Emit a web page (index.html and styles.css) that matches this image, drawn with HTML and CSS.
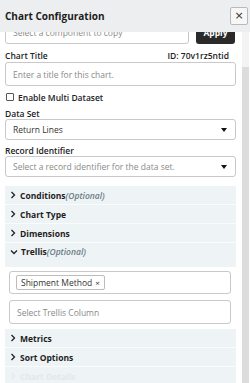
FILE: index.html
```html
<!DOCTYPE html>
<html lang="en">
<head>
<meta charset="UTF-8" />
<title>Chart Configuration</title>
<link rel="stylesheet" href="styles.css">
</head>
<body>
<div class="panel">
  <div class="panel-head">
    <h1>Chart Configuration</h1>
    <button class="close-btn">&times;</button>
  </div>

  <div class="panel-body">
    <div class="body-scroll">
      <div class="body-inner">
        <div class="copy-row">
          <div class="field copy-field">Select a component to copy</div>
          <button class="apply-btn">Apply</button>
        </div>

        <div class="label-row">
          <label>Chart Title</label>
          <span class="chart-id">ID: 70v1rz5ntid</span>
        </div>
        <div class="field">Enter a title for this chart.</div>

        <div class="check-row">
          <span class="check-box"></span>
          <span>Enable Multi Dataset</span>
        </div>

        <label class="label">Data Set</label>
        <div class="field select">
          <span class="value">Return Lines</span>
          <span class="caret"></span>
        </div>

        <label class="label">Record Identifier</label>
        <div class="field select">
          <span>Select a record identifier for the data set.</span>
          <span class="caret"></span>
        </div>

        <div class="accordion">
          <div class="acc-head">
            <svg class="chev" viewBox="0 0 6 8"><path d="M1.5 1 L4.5 4 L1.5 7" /></svg>
            <span>Conditions</span><em>(Optional)</em>
          </div>
          <div class="acc-head">
            <svg class="chev" viewBox="0 0 6 8"><path d="M1.5 1 L4.5 4 L1.5 7" /></svg>
            <span>Chart Type</span>
          </div>
          <div class="acc-head">
            <svg class="chev" viewBox="0 0 6 8"><path d="M1.5 1 L4.5 4 L1.5 7" /></svg>
            <span>Dimensions</span>
          </div>
          <div class="acc-head open">
            <svg class="chev" viewBox="0 0 8 6"><path d="M1 1.5 L4 4.5 L7 1.5" /></svg>
            <span>Trellis</span><em>(Optional)</em>
          </div>
          <div class="acc-content">
            <div class="field tag-field">
              <span class="chip">Shipment Method <span class="chip-x">&times;</span></span>
            </div>
            <div class="field">Select Trellis Column</div>
          </div>
          <div class="acc-head">
            <svg class="chev" viewBox="0 0 6 8"><path d="M1.5 1 L4.5 4 L1.5 7" /></svg>
            <span>Metrics</span>
          </div>
          <div class="acc-head">
            <svg class="chev" viewBox="0 0 6 8"><path d="M1.5 1 L4.5 4 L1.5 7" /></svg>
            <span>Sort Options</span>
          </div>
          <div class="acc-head faded">
            <svg class="chev" viewBox="0 0 6 8"><path d="M1.5 1 L4.5 4 L1.5 7" /></svg>
            <span>Chart Details</span>
          </div>
        </div>
      </div>
    </div>
    <div class="scrollbar">
      <div class="scroll-thumb"></div>
    </div>
  </div>
</div>
</body>
</html>
```

FILE: styles.css
```css
* {
  box-sizing: border-box;
}
body {
  margin: 0;
  background: #fff;
  color: #222;
  font-family: 'Open Sans', 'Noto Sans', sans-serif;
  font-size: 8.5px;
}
.panel {
  width: 250px;
  height: 383px;
  display: flex;
  flex-direction: column;
  overflow: hidden;
}
.panel-head {
  height: 32px;
  flex: none;
  background: #eceef0;
  display: flex;
  align-items: center;
  justify-content: space-between;
  padding: 0 2px 0 5px;
}
h1 {
  margin: 0;
  font-size: 10px;
  font-weight: 700;
  color: #1c1c1c;
}
.close-btn {
  width: 18px;
  height: 18px;
  padding: 0;
  border: 1px solid #b9b9b9;
  border-radius: 2px;
  background: #f7f7f7;
  color: #333;
  font-family: 'DejaVu Sans', sans-serif;
  font-size: 11px;
  line-height: 14px;
}
.panel-body {
  flex: 1;
  display: flex;
  min-height: 0;
}
.body-scroll {
  flex: 1;
  overflow: hidden;
  padding: 0 6px 0 5px;
}
.body-inner {
  margin-top: -12px;
}
.scrollbar {
  width: 7px;
  flex: none;
  margin-right: 1px;
  background: #f3f3f3;
  display: flex;
  flex-direction: column;
}
.scroll-thumb {
  margin-top: 35px;
  flex: 1;
  background: #dcdcdc;
}
.field {
  height: 24px;
  border: 1px solid #c9c9c9;
  border-radius: 3px;
  background: #fff;
  color: #8a8a8a;
  display: flex;
  align-items: center;
  padding: 0 7px;
}
.copy-row {
  display: flex;
  gap: 7px;
  padding-right: 1px;
}
.copy-field {
  flex: 1;
}
.apply-btn {
  width: 39px;
  height: 24px;
  border: none;
  border-radius: 3px;
  background: #2a2a2a;
  color: #fff;
  font-family: inherit;
  font-size: 8.5px;
  font-weight: 700;
}
.label-row {
  display: flex;
  justify-content: space-between;
  align-items: center;
  height: 11px;
  margin: 6px 7px 1px 0;
}
label,
.label {
  font-weight: 600;
  color: #222;
}
.label {
  display: block;
  line-height: 11px;
  margin-top: 5px;
  margin-bottom: 0;
}
.chart-id {
  font-weight: 600;
}
.check-row {
  display: flex;
  align-items: center;
  gap: 4px;
  height: 12px;
  margin: 5px 0 0 1px;
  font-weight: 600;
}
.check-box {
  width: 8px;
  height: 8px;
  border: 1px solid #555;
  border-radius: 1px;
}
.select {
  height: 21px;
  justify-content: space-between;
}
.select .value {
  color: #333;
}
.caret {
  width: 0;
  height: 0;
  border-left: 3px solid transparent;
  border-right: 3px solid transparent;
  border-top: 4px solid #111;
  margin-right: 1px;
}
.accordion {
  margin-top: 9px;
}
.acc-head {
  height: 19px;
  display: flex;
  align-items: center;
  padding-left: 5px;
  background: #eef3f5;
  border-bottom: 1px solid #fafcfc;
  font-weight: 700;
  color: #1e1e1e;
}
.acc-head em {
  font-weight: 600;
  color: #6b7c86;
}
.acc-head.open {
  height: 24px;
  align-items: flex-start;
  padding-top: 3px;
  border-bottom: none;
}
.acc-head.faded {
  color: #e4e8ea;
}
.acc-head.faded .chev path {
  stroke: #e4e8ea;
}
.chev {
  width: 6px;
  height: 8px;
  margin-right: 4px;
  flex: none;
}
.open .chev {
  width: 8px;
  height: 6px;
  margin-top: 3px;
  margin-right: 3px;
}
.chev path {
  fill: none;
  stroke: #222;
  stroke-width: 1.3;
}
.acc-content {
  background: #fff;
  padding: 4px 5px 5px 4px;
  display: flex;
  flex-direction: column;
  gap: 6px;
}
.tag-field {
  height: 23px;
  padding: 0 6px;
}
.chip {
  display: flex;
  align-items: center;
  height: 15px;
  padding: 0 4px;
  border: 1px solid #bdbdbd;
  border-radius: 2px;
  color: #333;
}
.chip-x {
  margin-left: 3px;
  font-size: 8px;
}
```
